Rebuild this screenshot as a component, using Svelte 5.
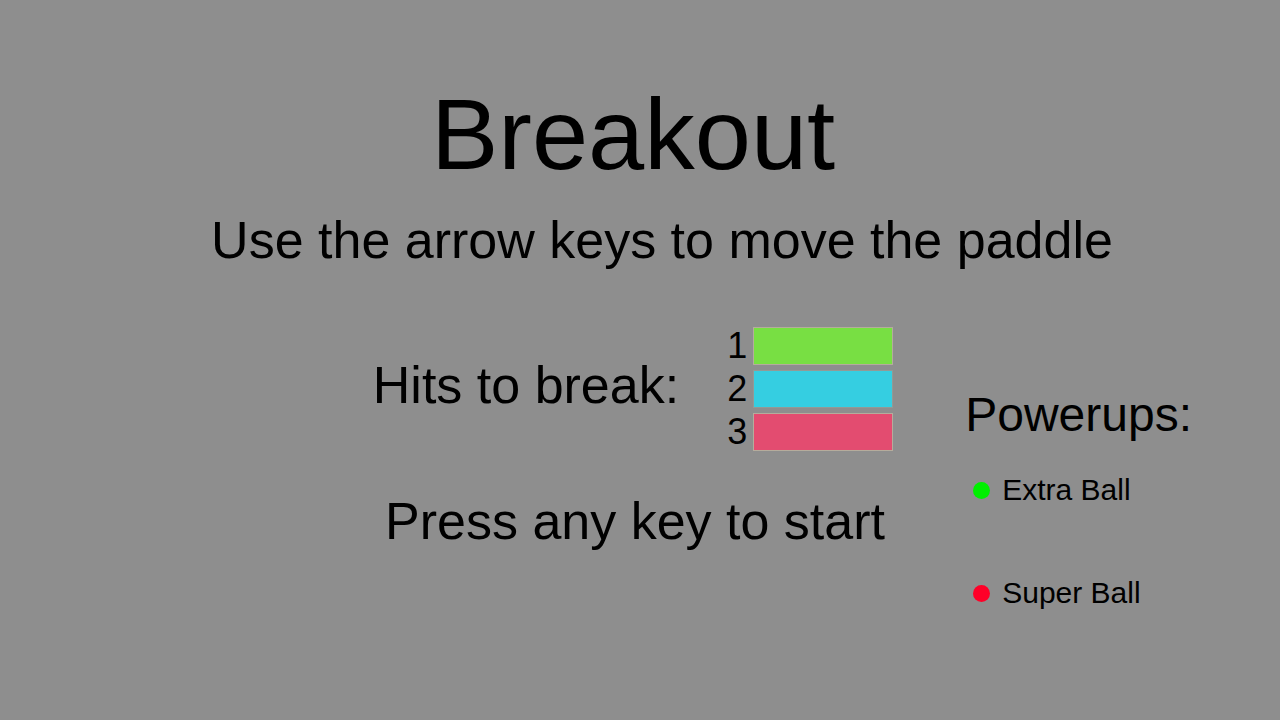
<script>
  const bricks = [
    { hits: 1, kind: 'green' },
    { hits: 2, kind: 'blue' },
    { hits: 3, kind: 'red' }
  ];
  const powerups = [
    { name: 'Extra Ball', kind: 'extra' },
    { name: 'Super Ball', kind: 'super' }
  ];
</script>

<main>
  <h1>Breakout</h1>
  <p class="lead">Use the arrow keys to move the paddle</p>
  <div class="info">
    <section class="guide">
      <div class="hits">
        <h2>Hits to break:</h2>
        <ol>
          {#each bricks as brick}
            <li><span>{brick.hits}</span><i class="brick {brick.kind}"></i></li>
          {/each}
        </ol>
      </div>
      <p class="start">Press any key to start</p>
    </section>
    <section class="powerups">
      <h2>Powerups:</h2>
      <ul>
        {#each powerups as powerup}
          <li><i class="ball {powerup.kind}"></i>{powerup.name}</li>
        {/each}
      </ul>
    </section>
  </div>
</main>

<style>
  :global(body) {
    background: #8e8e8e;
  }
  main {
    box-sizing: border-box;
    min-height: 100vh;
    padding: 74px 14px 74px 0;
    color: #000;
    font-family: "Liberation Sans", Arial, sans-serif;
  }
  h1, h2, p, ol, ul {
    margin: 0;
    padding: 0;
    font-weight: 400;
    list-style: none;
  }
  h1 {
    font-size: 101px;
    line-height: 120px;
    text-align: center;
  }
  .lead, .start, h2 {
    font-size: 52px;
    line-height: 60px;
    white-space: nowrap;
  }
  .lead {
    margin-top: 16px;
    padding-left: 58px;
    text-align: center;
  }
  .info {
    display: grid;
    grid-template-columns: 1fr auto 1fr;
    column-gap: 72px;
    margin-top: 57px;
  }
  .guide {
    grid-column: 2;
  }
  .hits {
    display: flex;
    align-items: center;
    justify-content: space-between;
    gap: 48px;
  }
  .hits h2 {
    padding-bottom: 8px;
  }
  ol {
    display: grid;
    gap: 5px;
  }
  ol li {
    display: flex;
    align-items: center;
    gap: 6px;
    font-size: 36px;
    line-height: 38px;
  }
  .brick {
    box-sizing: border-box;
    width: 140px;
    height: 38px;
    border: 1px solid #b5ac9c;
  }
  .green { background: #78df43; }
  .blue { background: #35cee1; border-color: #929a96; }
  .red { background: #e34c70; }
  .start {
    margin-top: 40px;
    padding-left: 4px;
    text-align: center;
  }
  .powerups {
    padding-top: 58px;
  }
  .powerups h2 {
    font-size: 48px;
  }
  ul {
    display: grid;
    gap: 63px;
    margin-top: 25px;
    padding-left: 8px;
  }
  ul li {
    display: flex;
    align-items: center;
    gap: 12px;
    font-size: 30px;
    line-height: 40px;
    white-space: nowrap;
  }
  .ball {
    width: 17px;
    height: 17px;
    border-radius: 50%;
  }
  .extra { background: #00f000; }
  .super { background: #ff0028; }
</style>
